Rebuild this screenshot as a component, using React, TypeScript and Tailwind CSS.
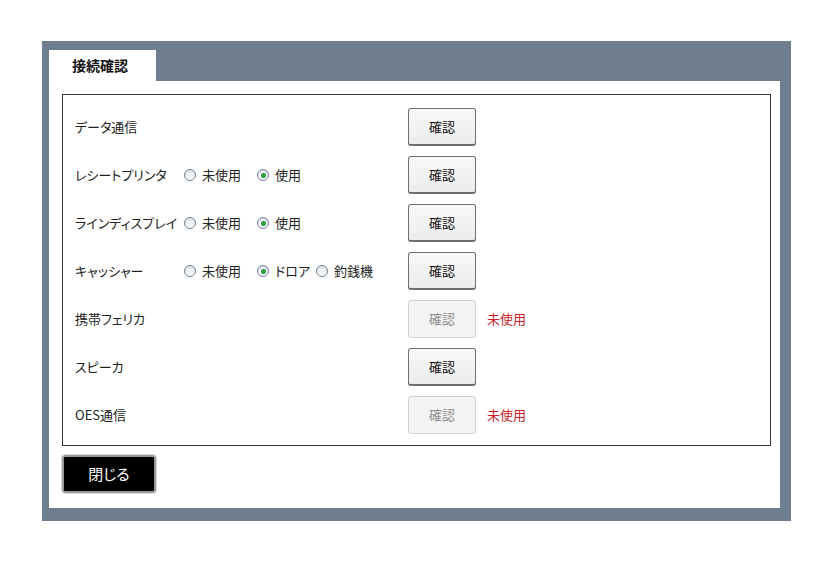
const font = "font-['Noto_Sans_CJK_JP','Noto_Sans',sans-serif] [font-feature-settings:'palt']";

type Opt = { label: string; checked?: boolean; w?: string };
type Row = { label: string; options?: Opt[]; disabled?: boolean };

const rows: Row[] = [
  { label: 'データ通信' },
  { label: 'レシートプリンタ', options: [{ label: '未使用', w: 'w-[73px]' }, { label: '使用', checked: true }] },
  { label: 'ラインディスプレイ', options: [{ label: '未使用', w: 'w-[73px]' }, { label: '使用', checked: true }] },
  {
    label: 'キャッシャー',
    options: [
      { label: '未使用', w: 'w-[73px]' },
      { label: 'ドロア', checked: true, w: 'w-[59px]' },
      { label: '釣銭機' },
    ],
  },
  { label: '携帯フェリカ', disabled: true },
  { label: 'スピーカ' },
  { label: 'OES通信', disabled: true },
];

function Radio({ checked }: { checked?: boolean }) {
  return (
    <span className="flex h-[12px] w-[12px] shrink-0 items-center justify-center rounded-full border border-[#6f7f91] bg-gradient-to-b from-[#dde3ea] to-[#ffffff]">
      {checked && <span className="h-[5px] w-[5px] rounded-full bg-[#2f9e3c]" />}
    </span>
  );
}

function CheckButton({ disabled }: { disabled?: boolean }) {
  return disabled ? (
    <button className="h-[38px] w-[68px] shrink-0 rounded-[3px] border border-[#d2d2d2] bg-[#f4f4f4] text-[13px] text-[#8c8c8c]">
      確認
    </button>
  ) : (
    <button className="h-[38px] w-[68px] shrink-0 rounded-[3px] border border-b-2 border-[#6f6f6f] bg-gradient-to-b from-[#f8f8f8] to-[#ececec] text-[13px] text-[#111]">
      確認
    </button>
  );
}

export default function App() {
  return (
    <div className={`min-h-[567px] bg-white pl-[42px] pt-[41px] ${font}`}>
      <div className="flex h-[480px] w-[749px] flex-col bg-[#6f7e8f] pb-[13px] pl-[7px] pr-[11px] pt-[9px]">
        <div className="flex h-[31px] w-[107px] items-center bg-white pl-[23px] text-[14px] font-bold text-[#111]">
          接続確認
        </div>
        <div className="flex flex-1 flex-col bg-white pl-[13px] pr-[9px] pt-[13px]">
          <div className="flex h-[352px] flex-col gap-[10px] border border-[#333] pl-[12px] pt-[13px]">
            {rows.map((r) => (
              <div key={r.label} className="flex h-[38px] items-center text-[13px] text-[#222]">
                <span className="w-[109px] shrink-0">{r.label}</span>
                <div className="flex w-[224px] shrink-0 items-center">
                  {r.options?.map((o) => (
                    <span key={o.label} className={`flex items-center gap-[6px] ${o.w ?? ''}`}>
                      <Radio checked={o.checked} />
                      <span>{o.label}</span>
                    </span>
                  ))}
                </div>
                <CheckButton disabled={r.disabled} />
                {r.disabled && <span className="ml-[11px] text-[#c8202a]">未使用</span>}
              </div>
            ))}
          </div>
          <div className="pt-[9px]">
            <button className="h-[38px] w-[94px] rounded-[3px] border-2 border-[#9a9a9a] bg-black text-[15px] text-white outline outline-1 outline-[#d8d8d8]">
              閉じる
            </button>
          </div>
        </div>
      </div>
    </div>
  );
}
